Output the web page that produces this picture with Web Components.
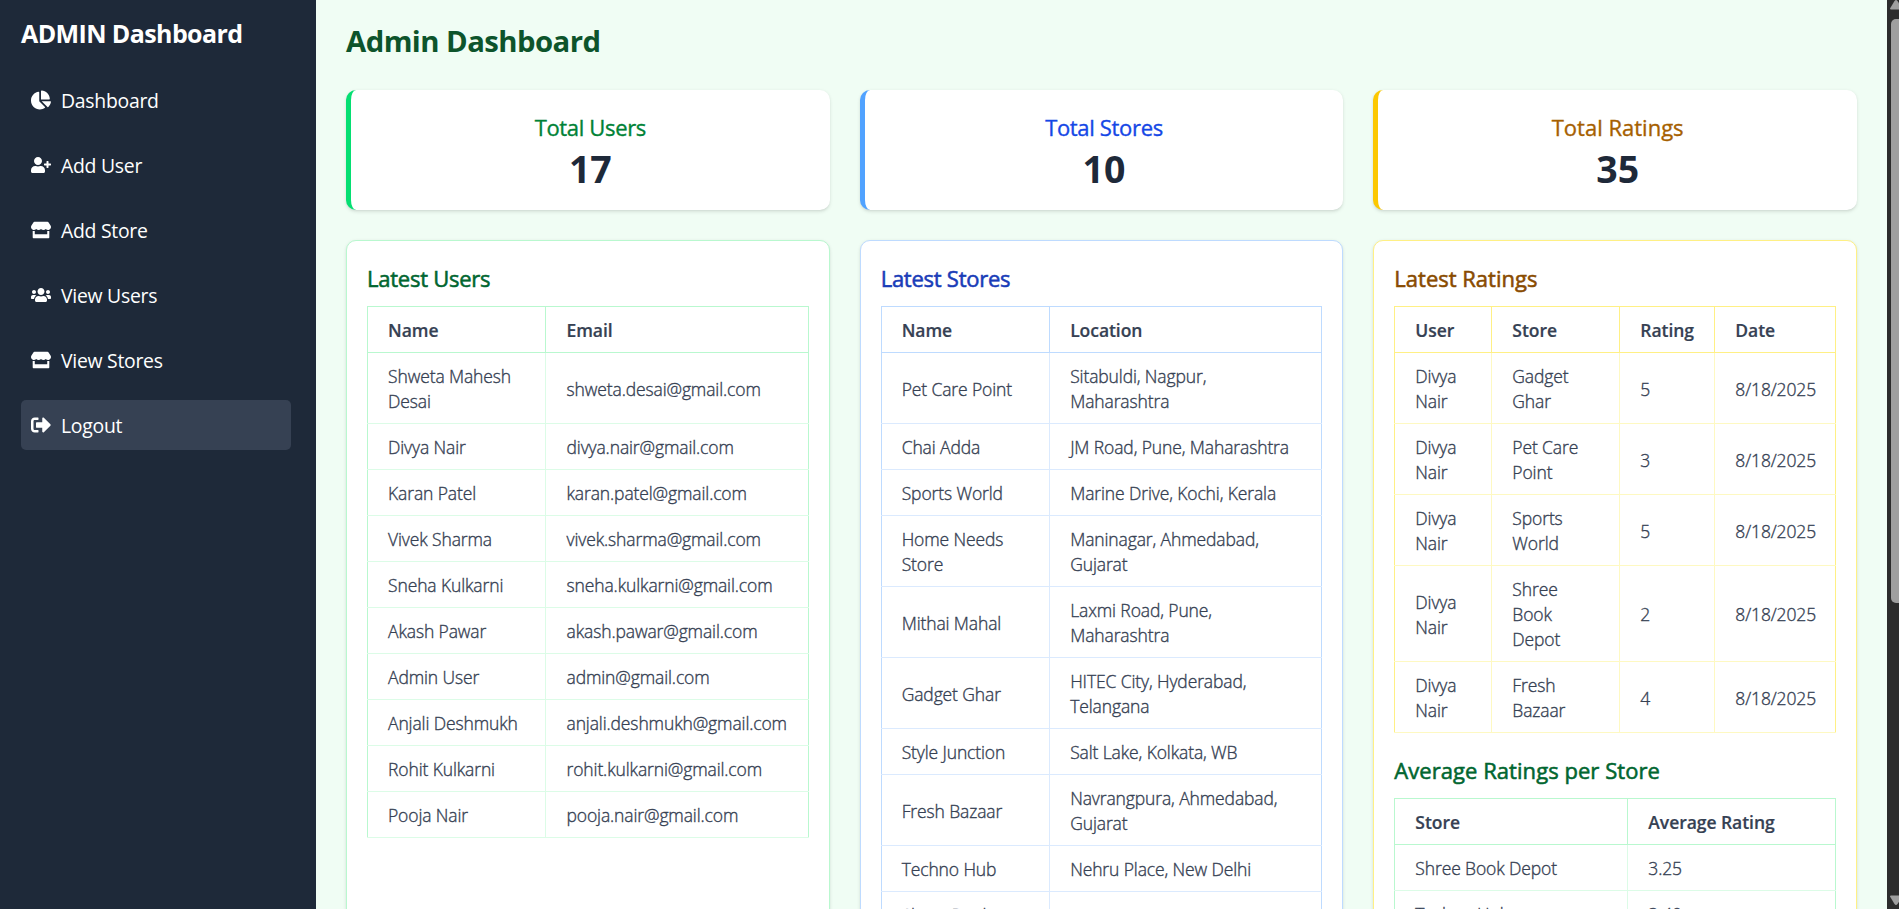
<!DOCTYPE html>
<html lang="en">
<head>
<meta charset="utf-8">
<title>Admin Dashboard</title>
<style>
html,body{margin:0;height:100%;overflow:hidden}
body{font-family:"Open Sans","Noto Sans",sans-serif;background:#f0fdf4;color:#364153}
</style>
</head>
<body>
<admin-app></admin-app>
<script>
const ICONS={
 pie:['0 0 544 512','M527.79 288H290.5l158.03 158.03c6.04 6.04 15.98 6.53 22.19.68 38.7-36.46 65.32-85.61 73.13-140.86 1.34-9.46-6.51-17.85-16.06-17.85zm-15.83-64.8C503.72 103.74 408.26 8.28 288.8.04 279.68-.59 272 7.1 272 16.24V240h223.77c9.14 0 16.82-7.68 16.19-16.8zM224 288V50.71c0-9.55-8.39-17.4-17.84-16.06C86.99 51.49-4.1 155.6.14 280.37 4.5 408.51 114.83 513.59 243.03 511.98c50.4-.63 96.97-16.87 135.26-44.03 7.9-5.6 8.42-17.23 1.57-24.08L224 288z'],
 userPlus:['0 0 640 512','M624 208h-64v-64c0-8.8-7.2-16-16-16h-32c-8.8 0-16 7.2-16 16v64h-64c-8.8 0-16 7.2-16 16v32c0 8.8 7.2 16 16 16h64v64c0 8.8 7.2 16 16 16h32c8.8 0 16-7.2 16-16v-64h64c8.8 0 16-7.2 16-16v-32c0-8.8-7.2-16-16-16zm-400 48c70.7 0 128-57.3 128-128S294.7 0 224 0 96 57.3 96 128s57.3 128 128 128zm89.6 32h-16.7c-22.2 10.2-46.9 16-72.9 16s-50.6-5.8-72.9-16h-16.7C60.2 288 0 348.2 0 422.4V464c0 26.5 21.5 48 48 48h352c26.5 0 48-21.5 48-48v-41.6c0-74.2-60.2-134.4-134.4-134.4z'],
 store:['0 0 616 512','M602 118.6L537.1 15C531.3 5.7 521 0 510 0H106C95 0 84.7 5.7 78.9 15L14 118.6c-33.5 53.5-3.8 127.9 58.8 136.4 4.5.6 9.1.9 13.7.9 29.6 0 55.8-13 73.8-33.1 18 20.1 44.300 33.1 73.8 33.1 29.6 0 55.8-13 73.8-33.1 18 20.1 44.3 33.1 73.8 33.1 29.6 0 55.8-13 73.8-33.1 18.1 20.1 44.3 33.1 73.8 33.1 4.7 0 9.2-.3 13.7-.9 62.8-8.4 92.6-82.8 59-136.4zM529.5 288c-10 0-19.9-1.5-29.5-3.8V384H116v-99.8c-9.6 2.2-19.5 3.8-29.5 3.8-6 0-12.1-.4-18-1.2-5.6-.8-11.1-2.1-16.4-3.6V480c0 17.7 14.3 32 32 32h448c17.7 0 32-14.3 32-32V283.2c-5.4 1.6-10.8 2.9-16.4 3.6-6.1.8-12.1 1.2-18.2 1.2z'],
 users:['0 0 640 512','M96 224c35.3 0 64-28.7 64-64s-28.7-64-64-64-64 28.7-64 64 28.7 64 64 64zm448 0c35.3 0 64-28.7 64-64s-28.7-64-64-64-64 28.7-64 64 28.7 64 64 64zm32 32h-64c-17.6 0-33.5 7.1-45.1 18.6 40.3 22.1 68.9 62 75.1 109.4h66c17.7 0 32-14.3 32-32v-32c0-35.3-28.7-64-64-64zm-256 0c61.9 0 112-50.1 112-112S381.9 32 320 32 208 82.1 208 144s50.1 112 112 112zm76.8 32h-8.3c-20.8 10-43.9 16-68.5 16s-47.6-6-68.5-16h-8.3C179.6 288 128 339.6 128 403.2V432c0 26.5 21.5 48 48 48h288c26.5 0 48-21.5 48-48v-28.8c0-63.6-51.6-115.2-115.2-115.2zm-223.7-13.4C161.5 263.1 145.6 256 128 256H64c-35.3 0-64 28.7-64 64v32c0 17.7 14.3 32 32 32h65.9c6.3-47.4 34.9-87.3 75.2-109.4z'],
 logout:['0 0 512 512','M497 273L329 441c-15 15-41 4.5-41-17v-96H152c-13.3 0-24-10.7-24-24v-96c0-13.3 10.7-24 24-24h136V88c0-21.4 25.9-32 41-17l168 168c9.3 9.4 9.3 24.6 0 34zM192 436v-40c0-6.600-5.4-12-12-12H96c-17.7 0-32-14.3-32-32V160c0-17.7 14.3-32 32-32h84c6.6 0 12-5.4 12-12V76c0-6.6-5.4-12-12-12H96c-53 0-96 43-96 96v192c0 53 43 96 96 96h84c6.6 0 12-5.4 12-12z']
};
const define=(name,render)=>customElements.define(name,class extends HTMLElement{
 connectedCallback(){ if(!this.shadowRoot){this.attachShadow({mode:'open'}).innerHTML=render(this);} }
});
define('nav-item',el=>{const [vb,d]=ICONS[el.getAttribute('icon')];return `
<style>
:host{display:flex;align-items:center;gap:10px;height:50px;padding:0 10px;border-radius:5px;box-sizing:border-box;color:#fff;font-size:19.4px;line-height:30px;letter-spacing:-.27px}
:host([active]){background:#364153}
svg{width:20px;height:20px;flex:none;fill:currentColor}
span{padding-top:2px}
</style><svg viewBox="${vb}"><path d="${d}"/></svg><span><slot></slot></span>`});
define('side-bar',()=>`
<style>
:host{display:flex;flex-direction:column;gap:15px;width:316px;flex:none;box-sizing:border-box;padding:13px 25px 0 21px;background:#1e2939;color:#fff}
h2{margin:0 0 7px;font-size:25px;line-height:40px;font-weight:700;white-space:nowrap;letter-spacing:-.6px}
</style><h2>ADMIN Dashboard</h2><slot></slot>`);
define('stat-card',el=>`
<style>
:host{display:block;box-sizing:border-box;height:120px;padding:20px;background:#fff;border-left:5px solid var(--edge);border-radius:10px;text-align:center;box-shadow:0 1.25px 3.75px rgba(0,0,0,.1),0 1.25px 2.5px -1.25px rgba(0,0,0,.1)}
h3{margin:0;font-size:22px;line-height:35px;font-weight:400;color:var(--ink);letter-spacing:var(--track,0);-webkit-text-stroke:.35px var(--ink)}
p{margin:0;padding-top:1px;font-size:37.5px;line-height:45px;font-weight:700;color:#1e2939}
</style><h3>${el.getAttribute('label')}</h3><p><slot></slot></p>`);
define('panel-card',()=>`
<style>
:host{display:flex;flex-direction:column;gap:20px;box-sizing:border-box;padding:20px;background:#fff;border:1px solid var(--line);border-radius:10px;box-shadow:0 1.25px 3.75px rgba(0,0,0,.1),0 1.25px 2.5px -1.25px rgba(0,0,0,.1)}
</style><slot></slot>`);
define('data-table',el=>{
 const cols=el.getAttribute('cols').split(',');
 const lines=el.textContent.trim().split('\n').map(l=>l.trim().split('|'));
 const cell=(t,tag)=>`<${tag}>${t.split(' / ').join('<br>')}</${tag}>`;
 return `
<style>
:host{display:block}
h3{margin:0 0 10px;font-size:22px;line-height:35px;font-weight:400;color:var(--ink);letter-spacing:var(--track,0);-webkit-text-stroke:.55px var(--ink)}
table{border-collapse:collapse;table-layout:fixed;width:100%;font-size:17.5px;line-height:25px}
th,td{box-sizing:border-box;padding:11px 0 9px 20px;text-align:left;vertical-align:middle;white-space:nowrap}
th{border:1px solid var(--line);font-weight:600;letter-spacing:-.05px;-webkit-text-stroke:.2px #364153}
td{border:1px solid var(--soft);font-weight:300;letter-spacing:-.12px;-webkit-text-stroke:.35px #364153}
th+th,td+td{padding-left:var(--inset,20.5px)}
td:first-child{border-left-color:var(--line)}
td:last-child{border-right-color:var(--line)}
</style><h3>${el.getAttribute('heading')}</h3>
<table><colgroup>${cols.map(c=>`<col${c?` style="width:${c}px"`:''}>`).join('')}</colgroup>
<thead><tr>${lines[0].map(t=>cell(t,'th')).join('')}</tr></thead>
<tbody>${lines.slice(1).map(r=>`<tr>${r.map(t=>cell(t,'td')).join('')}</tr>`).join('')}</tbody></table>`});
define('scroll-bar',()=>`
<style>
:host{display:flex;flex-direction:column;width:12px;flex:none;height:100%;background:#2c2c2c;align-items:flex-end;overflow:hidden}
.thumb{width:8px;height:584px;margin-top:9px;background:#9f9f9f;border-radius:5px 0 0 5px}
svg{display:block;width:9px;height:10px;fill:#9f9f9f}
.down{margin-top:auto;margin-bottom:4px}
</style><svg viewBox="0 0 9 10"><path d="M0 8.500L4.500 1Q6 -1 7.500 1L13 9.500H1Q0 9.500 0 8.500z"/></svg><div class="thumb"></div><svg class="down" viewBox="0 0 9 10"><path d="M0 1.500L4.500 9Q6 11 7.500 9L13 .5H1Q0 .5 0 1.500z"/></svg>`);
define('admin-app',()=>`
<style>
:host{display:flex;height:100vh;overflow:hidden}
main{flex:1;min-width:0;padding:21px 30px 0;box-sizing:border-box;overflow:hidden}
h1{margin:0 0 29px;font-size:29.3px;line-height:40px;font-weight:700;color:#0d542b;letter-spacing:-.55px}
.grid{display:grid;grid-template-columns:repeat(3,minmax(0,1fr));gap:30px}
.g{--edge:#05df72;--line:#b9f8cf;--soft:#dcfce7}
.b{--edge:#50a2ff;--line:#bedbff;--soft:#dbeafe}
.y{--edge:#fcc800;--line:#fff085;--soft:#fef9c2;--inset:20px}
stat-card.g{--ink:#008236;--track:-.35px}stat-card.b{--ink:#1447e6;--track:-.33px}stat-card.y{--ink:#a65f00}
data-table.g{--ink:#016630;--track:-.25px}data-table.b{--ink:#193cb8;--track:-.25px}data-table.y{--ink:#894b00}
data-table.avg{--track:.05px}
</style>
<side-bar>
<nav-item icon="pie">Dashboard</nav-item>
<nav-item icon="userPlus">Add User</nav-item>
<nav-item icon="store">Add Store</nav-item>
<nav-item icon="users">View Users</nav-item>
<nav-item icon="store">View Stores</nav-item>
<nav-item icon="logout" active>Logout</nav-item>
</side-bar>
<main><h1>Admin Dashboard</h1>
<div class="grid">
<stat-card class="g" label="Total Users">17</stat-card>
<stat-card class="b" label="Total Stores">10</stat-card>
<stat-card class="y" label="Total Ratings">35</stat-card>
<panel-card class="g"><data-table class="g" heading="Latest Users" cols="178,">Name|Email
Shweta Mahesh / Desai|shweta.desai@gmail.com
Divya Nair|divya.nair@gmail.com
Karan Patel|karan.patel@gmail.com
Vivek Sharma|vivek.sharma@gmail.com
Sneha Kulkarni|sneha.kulkarni@gmail.com
Akash Pawar|akash.pawar@gmail.com
Admin User|admin@gmail.com
Anjali Deshmukh|anjali.deshmukh@gmail.com
Rohit Kulkarni|rohit.kulkarni@gmail.com
Pooja Nair|pooja.nair@gmail.com</data-table></panel-card>
<panel-card class="b"><data-table class="b" heading="Latest Stores" cols="168,">Name|Location
Pet Care Point|Sitabuldi, Nagpur, / Maharashtra
Chai Adda|JM Road, Pune, Maharashtra
Sports World|Marine Drive, Kochi, Kerala
Home Needs / Store|Maninagar, Ahmedabad, / Gujarat
Mithai Mahal|Laxmi Road, Pune, / Maharashtra
Gadget Ghar|HITEC City, Hyderabad, / Telangana
Style Junction|Salt Lake, Kolkata, WB
Fresh Bazaar|Navrangpura, Ahmedabad, / Gujarat
Techno Hub|Nehru Place, New Delhi
Shree Book / Depot|</data-table></panel-card>
<panel-card class="y"><data-table class="y" heading="Latest Ratings" cols="97,128,95,">User|Store|Rating|Date
Divya / Nair|Gadget / Ghar|5|8/18/2025
Divya / Nair|Pet Care / Point|3|8/18/2025
Divya / Nair|Sports / World|5|8/18/2025
Divya / Nair|Shree / Book / Depot|2|8/18/2025
Divya / Nair|Fresh / Bazaar|4|8/18/2025</data-table>
<data-table class="g avg" heading="Average Ratings per Store" cols="233,">Store|Average Rating
Shree Book Depot|3.25
Techno Hub|3.40</data-table></panel-card>
</div></main>
<scroll-bar></scroll-bar>`);
</script>
</body>
</html>
